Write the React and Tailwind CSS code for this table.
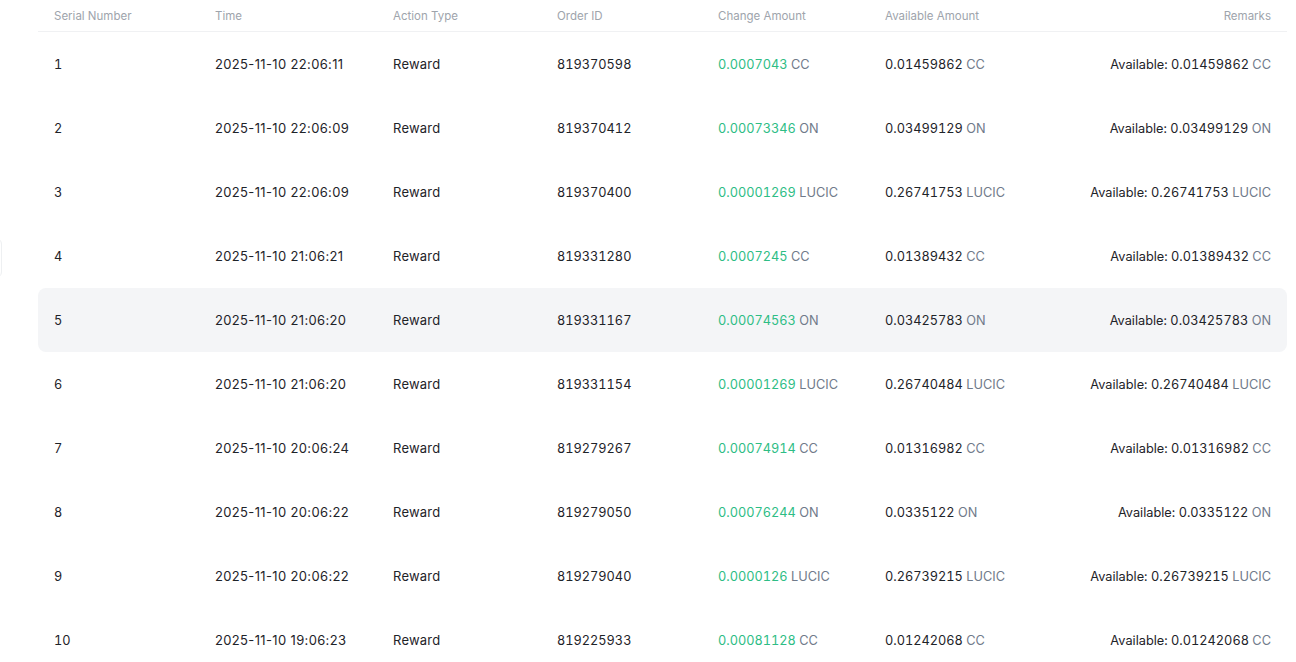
import React from "react";

const rows = [
  ["1", "2025-11-10 22:06:11", "819370598", "0.0007043", "CC", "0.01459862"],
  ["2", "2025-11-10 22:06:09", "819370412", "0.00073346", "ON", "0.03499129"],
  ["3", "2025-11-10 22:06:09", "819370400", "0.00001269", "LUCIC", "0.26741753"],
  ["4", "2025-11-10 21:06:21", "819331280", "0.0007245", "CC", "0.01389432"],
  ["5", "2025-11-10 21:06:20", "819331167", "0.00074563", "ON", "0.03425783"],
  ["6", "2025-11-10 21:06:20", "819331154", "0.00001269", "LUCIC", "0.26740484"],
  ["7", "2025-11-10 20:06:24", "819279267", "0.00074914", "CC", "0.01316982"],
  ["8", "2025-11-10 20:06:22", "819279050", "0.00076244", "ON", "0.0335122"],
  ["9", "2025-11-10 20:06:22", "819279040", "0.0000126", "LUCIC", "0.26739215"],
  ["10", "2025-11-10 19:06:23", "819225933", "0.00081128", "CC", "0.01242068"],
];

const grid = "grid grid-cols-[161px_178px_164px_161px_167px_1fr_auto] items-center px-4";

export default function App() {
  return (
    <div
      className="relative w-[1296px] h-[662px] overflow-hidden bg-white"
      style={{ fontFamily: "Inter, 'Noto Sans', sans-serif" }}
    >
      <div className="absolute left-[-20px] top-[238px] w-[22px] h-[40px] rounded-md border border-[#eef0f2]" />
      <div className="ml-[38px] w-[1249px]">
        <div className={`${grid} h-[32px] pt-[3px] border-b border-[#f0f1f3] text-[11.5px] text-[#9ea4ac]`}>
          <div>Serial Number</div>
          <div>Time</div>
          <div>Action Type</div>
          <div>Order ID</div>
          <div>Change Amount</div>
          <div>Available Amount</div>
          <div className="text-right">Remarks</div>
        </div>
        {rows.map((r, i) => (
          <div
            key={r[0]}
            className={`${grid} h-[64px] pt-[1px] text-[12.75px] tabular-nums text-[#1e2329] rounded-lg ${i === 4 ? "bg-[#f4f5f7]" : ""}`}
          >
            <div>{r[0]}</div>
            <div className="text-[13px] proportional-nums tracking-[0.35px]">{r[1]}</div>
            <div className="text-[13px] tracking-[0.2px]">Reward</div>
            <div>{r[2]}</div>
            <div>
              <span className="text-[#2ebd85]">{r[3]}</span>{" "}
              <span className="text-[#707a8a]">{r[4]}</span>
            </div>
            <div>
              {r[5]} <span className="text-[#707a8a]">{r[4]}</span>
            </div>
            <div className="text-right">
              Available: {r[5]} <span className="text-[#707a8a]">{r[4]}</span>
            </div>
          </div>
        ))}
      </div>
    </div>
  );
}
